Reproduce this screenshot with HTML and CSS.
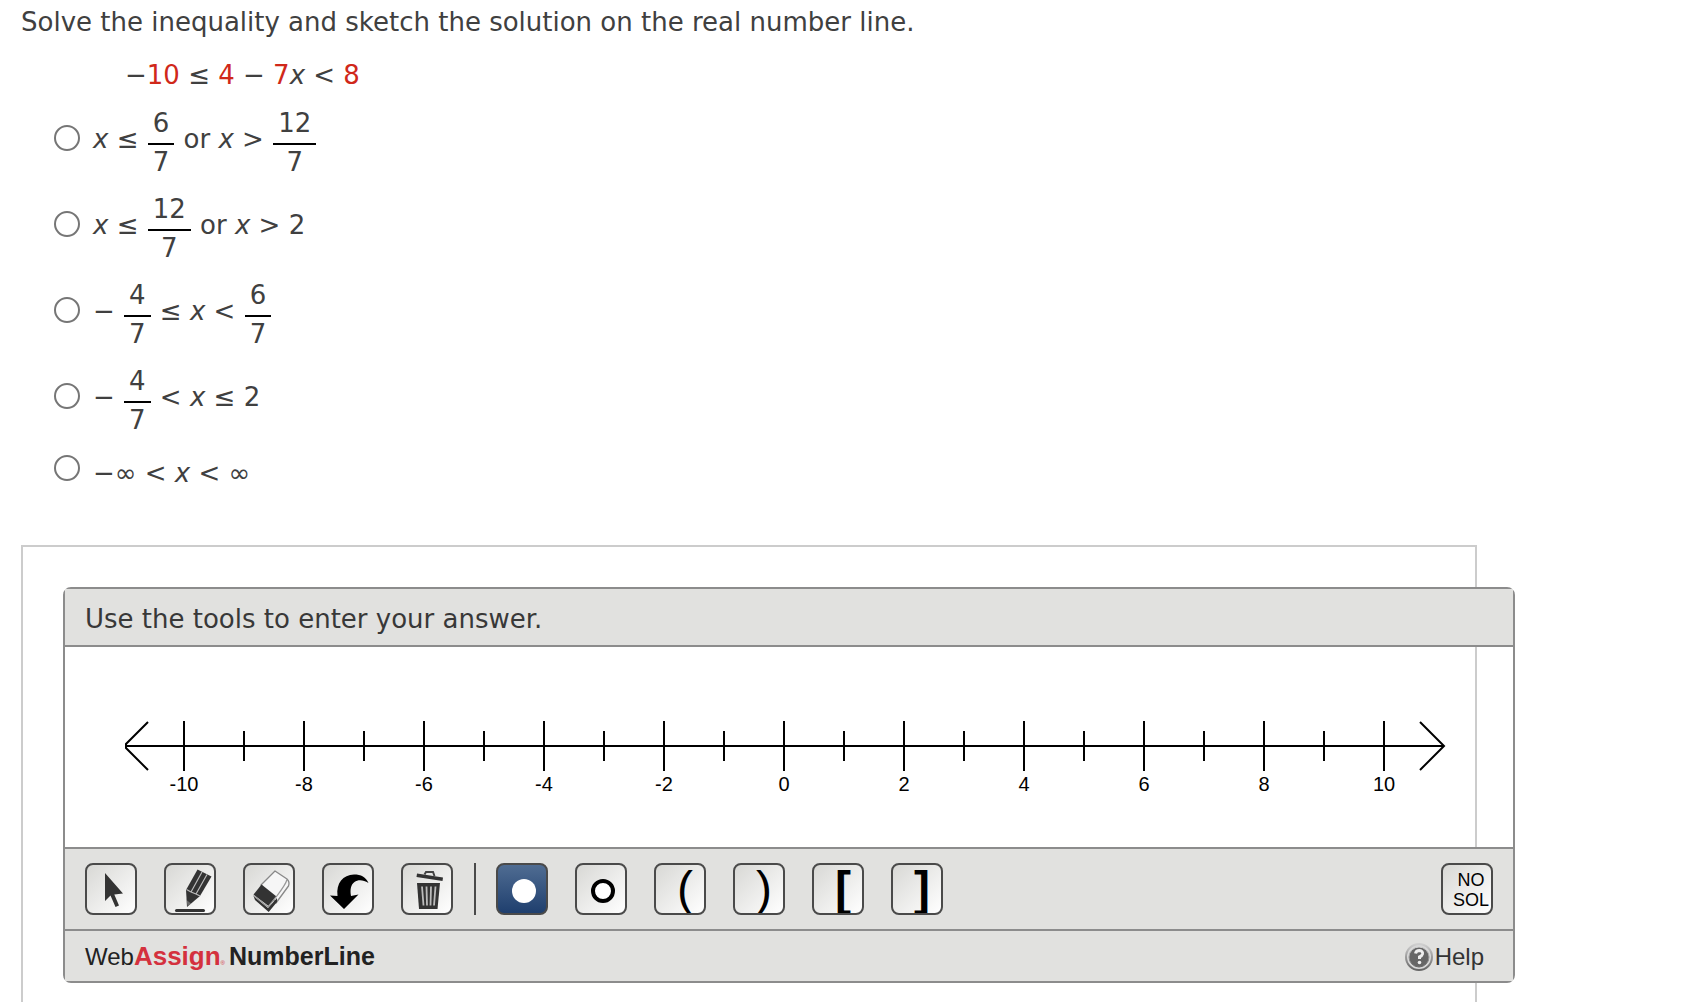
FILE: index.html
```
<!DOCTYPE html>
<html lang="en">
<head>
    <meta charset="UTF-8">
    <meta name="viewport" content="width=device-width, initial-scale=1.0">
    <title>Solve the inequality</title>
    <link rel="stylesheet" href="styles.css">
</head>
<body>
    <main class="question">
        <p class="prompt">Solve the inequality and sketch the solution on the real number line.</p>
        <p class="equation">−<b>10</b> ≤ <b>4</b> − <b>7</b><i>x</i> &lt; <b>8</b></p>

        <form class="choices">
            <label class="choice">
                <input type="radio" name="answer" value="0">
                <span><i>x</i> ≤ <span class="frac"><span class="num">6</span><span class="den">7</span></span> or <i>x</i> &gt; <span class="frac"><span class="num">12</span><span class="den">7</span></span></span>
            </label>
            <label class="choice">
                <input type="radio" name="answer" value="1">
                <span><i>x</i> ≤ <span class="frac"><span class="num">12</span><span class="den">7</span></span> or <i>x</i> &gt; 2</span>
            </label>
            <label class="choice">
                <input type="radio" name="answer" value="2">
                <span>− <span class="frac"><span class="num">4</span><span class="den">7</span></span> ≤ <i>x</i> &lt; <span class="frac"><span class="num">6</span><span class="den">7</span></span></span>
            </label>
            <label class="choice">
                <input type="radio" name="answer" value="3">
                <span>− <span class="frac"><span class="num">4</span><span class="den">7</span></span> &lt; <i>x</i> ≤ 2</span>
            </label>
            <label class="choice">
                <input type="radio" name="answer" value="4">
                <span>−∞ &lt; <i>x</i> &lt; ∞</span>
            </label>
        </form>

        <section class="frame">
            <div class="panel">
                <div class="panel-header">Use the tools to enter your answer.</div>

                <svg class="axis" viewBox="0 0 1448 200" role="img" aria-label="Number line from -10 to 10">
                    <path class="line" d="M61 99H1378M83 75L61 97V101L83 123M1355 75L1379 99L1355 123"/>
                    <!-- major ticks -->
                    <path class="line" d="M119 74v50M239 74v50M359 74v50M479 74v50M599 74v50M719 74v50M839 74v50M959 74v50M1079 74v50M1199 74v50M1319 74v50"/>
                    <!-- minor ticks -->
                    <path class="line" d="M179 84v30M299 84v30M419 84v30M539 84v30M659 84v30M779 84v30M899 84v30M1019 84v30M1139 84v30M1259 84v30"/>
                    <text x="119" y="144">-10</text>
                    <text x="239" y="144">-8</text>
                    <text x="359" y="144">-6</text>
                    <text x="479" y="144">-4</text>
                    <text x="599" y="144">-2</text>
                    <text x="719" y="144">0</text>
                    <text x="839" y="144">2</text>
                    <text x="959" y="144">4</text>
                    <text x="1079" y="144">6</text>
                    <text x="1199" y="144">8</text>
                    <text x="1319" y="144">10</text>
                </svg>

                <div class="toolbar">
                    <div class="tools">
                        <button type="button" class="tool" aria-label="Select">
                            <svg viewBox="0 0 48 48"><path fill="#333" d="M18 8V36L23.500 30.500L28.500 42L32 40.500L27.300 29.500L36 28.500Z"/></svg>
                        </button>
                        <button type="button" class="tool" aria-label="Draw">
                            <svg viewBox="0 0 48 48">
                                <path fill="#333" d="M31.500 4.500L45.500 11.500L34 31L21 42L20 25Z"/>
                                <path fill="none" stroke="#bbb" stroke-width="1.200" d="M36 7L25 27M41 9.500L30 29M20.500 24.500L25 27L30 29L34 31"/>
                                <path fill="#e8e8e8" d="M20.500 35L25 38.500L21.500 41Z" opacity=".3"/>
                                <path stroke="#333" stroke-width="3" stroke-linecap="round" d="M10.500 45.500H37.500"/>
                            </svg>
                        </button>
                        <button type="button" class="tool" aria-label="Erase">
                            <svg viewBox="0 0 48 48">
                                <path fill="#f6f6f6" stroke="#888" stroke-width="1.300" stroke-linejoin="round" d="M30 6L42 14Q45 17 43.500 21L31 38L16 20Z"/>
                                <path fill="#333" d="M16.500 19.500L31.500 31.500L23.500 41L8.500 29.500Z"/>
                                <path fill="#333" d="M8.500 31L23 43L32 33V37L23.700 47L10 35Z"/>
                                <path fill="none" stroke="#999" stroke-width="1.200" d="M42 14.500Q41 19 31.500 31.500L23 42L8.500 30.500"/>
                            </svg>
                        </button>
                        <button type="button" class="tool" aria-label="Undo">
                            <svg viewBox="0 0 48 48"><path fill="#000" d="M20 44L6 30.500L13.500 31C12 18 19 10 30 9.500C37 9.500 42 12 44.500 18C39 14.500 34 14.500 30.500 17C26.500 20 26 25 27 31L34.500 29.500Z"/></svg>
                        </button>
                        <button type="button" class="tool" aria-label="Clear all">
                            <svg viewBox="0 0 48 48">
                                <path fill="#333" d="M14 8.500L40 12.500L39.500 16L13.500 12Z"/>
                                <path fill="none" stroke="#444" stroke-width="2" d="M21.500 9.500L23 7H30L31.500 11"/>
                                <path fill="#333" d="M14 18H37L34.500 44H16Z"/>
                                <path stroke="#bbb" stroke-width="1.800" d="M19 21.500L20.500 40.500M23.500 21.500L24 40.500M28 21.500L27.500 40.500M32.500 21.500L31 40.500"/>
                            </svg>
                        </button>
                    </div>
                    <div class="tools marks">
                        <button type="button" class="tool active" aria-label="Closed point">
                            <svg viewBox="0 0 48 48"><circle cx="26" cy="26" r="12" fill="#fff"/></svg>
                        </button>
                        <button type="button" class="tool" aria-label="Open point">
                            <svg viewBox="0 0 48 48"><circle cx="26" cy="26" r="10" fill="#fff" stroke="#000" stroke-width="4"/></svg>
                        </button>
                        <button type="button" class="tool paren">(</button>
                        <button type="button" class="tool paren">)</button>
                        <button type="button" class="tool bracket">[</button>
                        <button type="button" class="tool bracket">]</button>
                    </div>
                    <button type="button" class="tool no-solution">NO<br>SOL</button>
                </div>

                <div class="panel-footer">
                    <div class="brand"><span class="web">Web</span><span class="assign">Assign</span><span class="reg">®</span><span class="product">NumberLine</span></div>
                    <a class="help" href="#">
                        <svg class="help-icon" viewBox="0 0 28 28" aria-hidden="true">
                            <defs>
                                <linearGradient id="ring" x1="0" y1="0" x2="0" y2="1">
                                    <stop offset="0" stop-color="#d0d0d0"/>
                                    <stop offset="1" stop-color="#666"/>
                                </linearGradient>
                            </defs>
                            <circle cx="14" cy="14" r="13" fill="#d8d8d8" stroke="url(#ring)" stroke-width="2"/>
                            <circle cx="14" cy="14" r="10" fill="#666" stroke="url(#ring)" stroke-width="1"/>
                            <path d="M10.500 10.500Q11 7.500 14.500 7.500Q18 8 17.500 11Q17 13 14.500 14V16" fill="none" stroke="#eee" stroke-width="3"/>
                            <circle cx="14.500" cy="19.500" r="1.800" fill="#eee"/>
                        </svg>
                        <span>Help</span>
                    </a>
                </div>
            </div>
        </section>
    </main>
</body>
</html>
```
FILE: styles.css
```
* {
    margin: 0;
    padding: 0;
    box-sizing: border-box;
}

body {
    font-family: Verdana, "DejaVu Sans", sans-serif;
    font-size: 26px;
    line-height: 32px;
    color: #404040;
    background: #fff;
}

.question {
    min-height: 100vh;
    display: flex;
    flex-direction: column;
    padding: 6px 225px 0 21px;
}

.equation {
    margin: 21px 0 16px 104px;
}

.equation b {
    font-weight: normal;
    color: #d0281a;
}

/* Answer choices */
.choices {
    display: flex;
    flex-direction: column;
    gap: 15px;
    padding-left: 33px;
}

.choice {
    display: flex;
    align-items: center;
    min-height: 44px;
}

.choice input {
    appearance: none;
    width: 26px;
    height: 26px;
    margin: 0 13px 10px 0;
    border: 2px solid #767676;
    border-radius: 50%;
    background: #fff;
}

.choice input:checked {
    background: #1a73e8;
}

/* raised so that the bar sits level with the operators */
.frac {
    display: inline-flex;
    flex-direction: column;
    margin: 0 1px;
    text-align: center;
    vertical-align: 16px;
}

.num {
    padding: 0 5px 4px;
    border-bottom: 2px solid #000;
}

.den {
    padding-top: 1px;
}

/* Number line widget, wider than its frame */
.frame {
    flex: 1;
    margin-top: 50px;
    padding: 40px 40px 17px;
    border: 2px solid #ccc;
    border-bottom: none;
}

.panel {
    margin-right: -80px;
    border: 2px solid #8c8c8c;
    border-radius: 8px;
}

.panel-header,
.toolbar,
.panel-footer {
    background: #e1e1df;
}

.panel-header {
    padding: 14px 20px 10px;
    color: #383838;
    border-bottom: 2px solid #8c8c8c;
}

.axis {
    display: block;
    width: 100%;
}

.axis .line {
    fill: none;
    stroke: #000;
    stroke-width: 2;
}

.axis text {
    font-family: "Liberation Sans", Arial, sans-serif;
    font-size: 20px;
    text-anchor: middle;
}

.toolbar {
    display: flex;
    padding: 14px 20px;
    border-top: 2px solid #8c8c8c;
    border-bottom: 2px solid #8c8c8c;
}

.tools {
    display: flex;
    gap: 27px;
}

.marks {
    margin-left: 21px;
    padding-left: 20px;
    border-left: 2px solid #4a4a4a;
}

.tool {
    width: 52px;
    height: 52px;
    border: 2px solid #4a4a4a;
    border-radius: 8px;
    background: linear-gradient(135deg, #d8d8d5, #fff);
    font-family: "Liberation Sans", Arial, sans-serif;
    color: #000;
    overflow: hidden;
    cursor: pointer;
}

.tool svg {
    display: block;
    width: 48px;
    height: 48px;
}

.tool.active {
    background: linear-gradient(to bottom, #4f6c92, #1f3f6e);
}

.paren,
.bracket {
    padding-left: 10px;
    font-size: 48px;
    line-height: 44px;
}

.bracket {
    font-weight: bold;
}

.no-solution {
    margin-left: auto;
    padding: 2px 0 0 8px;
    font-size: 18px;
    line-height: 20px;
}

.panel-footer {
    display: flex;
    justify-content: space-between;
    align-items: center;
    height: 50px;
    padding: 2px 29px 0 20px;
    font-family: "Liberation Sans", Arial, sans-serif;
    font-size: 24px;
}

.brand {
    display: flex;
    align-items: baseline;
    padding-top: 4px;
    color: #222;
}

.assign {
    font-size: 26px;
    font-weight: bold;
    color: #d4313e;
}

.reg {
    margin-right: 4px;
    font-size: 6px;
    color: #d4313e;
}

.product {
    font-size: 25px;
    font-weight: bold;
}

.help {
    display: flex;
    align-items: center;
    gap: 2px;
    color: #333;
    text-decoration: none;
}

.help-icon {
    width: 28px;
    height: 28px;
}
```
